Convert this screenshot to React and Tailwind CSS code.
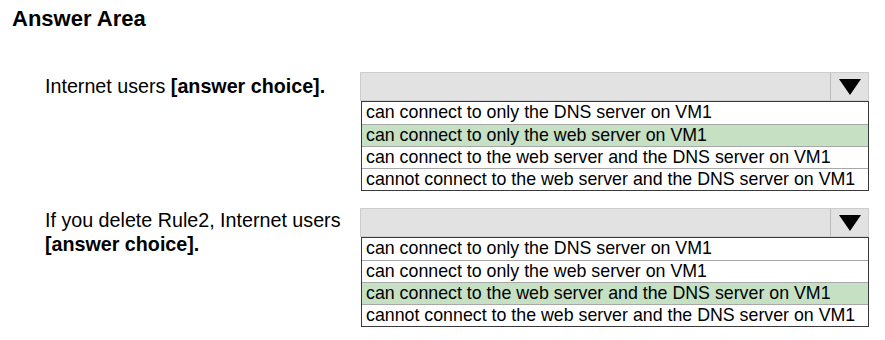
const options = [
  'can connect to only the DNS server on VM1',
  'can connect to only the web server on VM1',
  'can connect to the web server and the DNS server on VM1',
  'cannot connect to the web server and the DNS server on VM1',
];

function Dropdown({ selected }) {
  return (
    <div className="w-[509px]">
      {/* select header */}
      <div className="flex h-[29px] border border-[#cdcdcd] bg-[#e2e2e2]">
        <div className="flex-1" />
        <div className="flex w-[38px] items-center justify-center border-l border-[#bcbcbc]">
          <svg width="22" height="16" viewBox="0 0 22 16">
            <polygon points="0,0 22,0 11,16" fill="#000" />
          </svg>
        </div>
      </div>
      {/* option list */}
      <div className="ml-px w-[508px] border border-[#3a3a3a] bg-white">
        {options.map((opt, i) => (
          <div
            key={i}
            className={`h-[22px] px-[4px] text-[17.8px] leading-[21px] text-black ${
              i > 0 ? 'border-t border-[#a8a8a8]' : ''
            } ${i === selected ? 'bg-[#c5e0c3]' : ''}`}
          >
            {opt}
          </div>
        ))}
      </div>
    </div>
  );
}

export default function App() {
  return (
    <div className="h-[340px] w-[885px] bg-white font-['Liberation_Sans',Arial,sans-serif] text-black">
      <h1 className="pl-[12px] pt-[6px] text-[22px] font-bold leading-[25px]">Answer Area</h1>

      <div className="mt-[41px] flex pl-[45px]">
        <div className="w-[315px] text-[19.7px] leading-[29px]">
          Internet users <b>[answer choice].</b>
        </div>
        <Dropdown selected={1} />
      </div>

      <div className="mt-[17px] flex pl-[45px]">
        <div className="w-[315px] text-[19.7px] leading-[24px]">
          If you delete Rule2, Internet users
          <br />
          <b>[answer choice].</b>
        </div>
        <Dropdown selected={2} />
      </div>
    </div>
  );
}
